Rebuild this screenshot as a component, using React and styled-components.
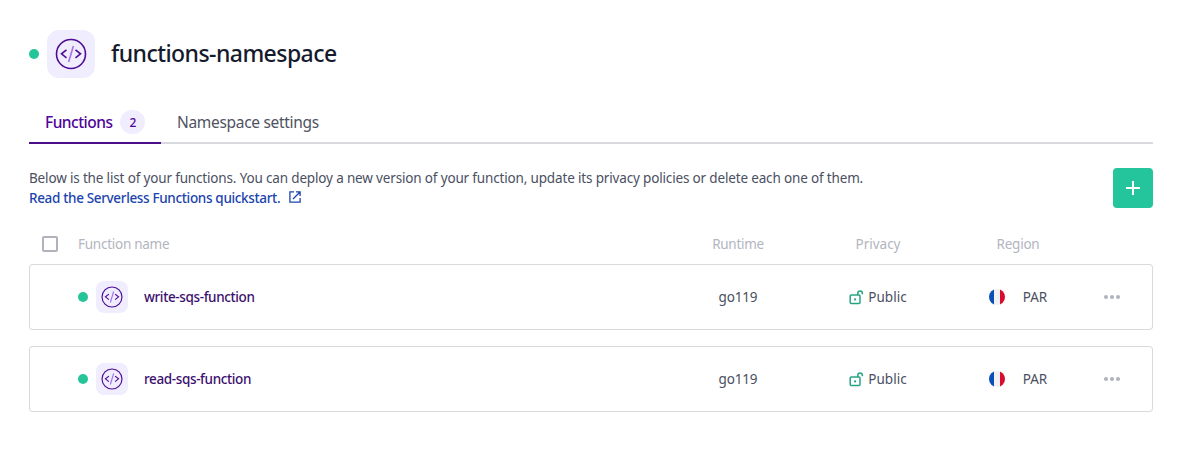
import React from "react";
import styled, { createGlobalStyle } from "styled-components";

const Global = createGlobalStyle`
  * { box-sizing: border-box; }
  body { margin: 0; background: #fff; }
`;

const Page = styled.main`
  min-height: 449px;
  padding: 30px 24px 37px 29px;
  font-family: "Noto Sans", "Open Sans", sans-serif;
  font-size: 13.5px;
  color: #4a4f62;
  background: #fff;
`;

const Text = styled.span`
  white-space: nowrap;
  letter-spacing: ${(p) => p.$spacing || 0}px;
`;

const Header = styled.header`
  display: flex;
  align-items: center;
  height: 48px;
`;

const StatusDot = styled.span`
  flex: none;
  width: 10px;
  height: 10px;
  border-radius: 50%;
  background: #25c599;
  margin-right: 8px;
`;

const IconTile = styled.span`
  flex: none;
  display: grid;
  place-items: center;
  width: ${(p) => p.$size}px;
  height: ${(p) => p.$size}px;
  border-radius: ${(p) => p.$size / 4}px;
  background: #f0edff;
`;

const Title = styled.h1`
  margin: 0 0 0 16px;
  font-size: 23px;
  line-height: 32px;
  padding-bottom: 2px;
  font-weight: 500;
  color: #151a2d;
`;

const Tabs = styled.nav`
  display: flex;
  height: 44px;
  margin-top: 22px;
  box-shadow: inset 0 -2px #d9dadd;
`;

const Tab = styled.a`
  display: flex;
  align-items: center;
  gap: 8px;
  padding: 2px 16px 0;
  width: ${(p) => p.$width}px;
  font-size: 15.5px;
  font-weight: ${(p) => (p.$active ? 500 : 450)};
  color: ${(p) => (p.$active ? "#4f0599" : "#4f5361")};
  border-bottom: 2px solid ${(p) => (p.$active ? "#4b0d88" : "transparent")};
`;

const Badge = styled.span`
  display: grid;
  place-items: center;
  flex: none;
  width: 25px;
  height: 24px;
  border-radius: 12px;
  background: #f0edff;
  font-size: 12px;
  font-weight: 500;
`;

const Intro = styled.section`
  display: flex;
  justify-content: space-between;
  height: 40px;
  margin-top: 24px;
`;

const Copy = styled.p`
  margin: 0;
  line-height: 20px;
`;

const DocLink = styled.a`
  display: flex;
  align-items: center;
  gap: 9px;
  font-weight: 500;
  color: #1b44ad;

  svg { margin-bottom: 3px; }
`;

const AddButton = styled.button`
  display: grid;
  place-items: center;
  width: 40px;
  height: 40px;
  padding: 0;
  border: 0;
  border-radius: 4px;
  background: #24c59c;
`;

const Grid = styled.div`
  display: grid;
  grid-template-columns: 49px 1fr 140px 140px 140px 48px 17px;
  align-items: center;
`;

const TableHead = styled(Grid)`
  height: 40px;
  margin-top: 16px;
  color: #b3b5bf;
`;

const Row = styled(Grid)`
  height: 66px;
  margin-bottom: 16px;
  border-radius: 4px;
  box-shadow: inset 0 0 0 1px #d9dadd;
`;

const Checkbox = styled.span`
  width: 16px;
  height: 16px;
  margin-left: 13px;
  border: 2px solid #b0b2bc;
  border-radius: 2px;
`;

const Cell = styled.div`
  display: flex;
  align-items: center;
  justify-content: center;
  gap: ${(p) => p.$gap || 0}px;
`;

const NameCell = styled.div`
  grid-column: 2;
  display: flex;
  align-items: center;
`;

const FunctionName = styled(Text)`
  margin-left: 16px;
  font-weight: 500;
  color: #3c0f6e;
`;

const Flag = styled.span`
  width: 16px;
  height: 16px;
  border-radius: 50%;
  background: linear-gradient(90deg, #0b4fb3 0 33%, #f1f1f3 33% 67%, #d80c31 67%);
`;

const Svg = styled.svg`
  display: block;
  flex: none;
`;

function CodeIcon({ size, stroke = 1.6 }) {
  return (
    <Svg width={size} height={size} viewBox="0 0 32 32" fill="none" strokeWidth={stroke}>
      <circle cx="16" cy="16" r="14.5" stroke="#4d0c93" />
      <path d="M11.5 11.8 6.5 15.8l5 4M20.5 11.8l5 4-5 4" stroke="#4d0c93" />
      <path d="M18.4 8 13.6 24" stroke="#a574ea" />
    </Svg>
  );
}

function ExternalIcon() {
  return (
    <Svg width="12" height="12" viewBox="0 0 12 12" fill="none" stroke="#1b44ad" strokeWidth="1.3">
      <path d="M5 .9H.9v10.2h10.2V7M7 .9h4.1V5M11 1 4 8" />
    </Svg>
  );
}

function UnlockIcon() {
  return (
    <Svg width="15" height="15" viewBox="0 0 15 15" fill="none" stroke="#27a582" strokeWidth="1.5">
      <rect x="1.2" y="5" width="9.8" height="8.6" rx="1" />
      <path d="M8.8 5V3.4a2.3 2.3 0 0 1 4.6 0V4.3" />
      <rect x="5.1" y="8.4" width="2" height="2" fill="#27a582" stroke="none" />
    </Svg>
  );
}

function FunctionRow({ name, spacing }) {
  return (
    <Row>
      <NameCell>
        <StatusDot />
        <IconTile $size={32}><CodeIcon size={22} stroke={1.7} /></IconTile>
        <FunctionName $spacing={spacing}>{name}</FunctionName>
      </NameCell>
      <Cell><Text $spacing={-0.15}>go119</Text></Cell>
      <Cell $gap={4}><UnlockIcon /><Text>Public</Text></Cell>
      <Cell $gap={18}><Flag /><Text>PAR</Text></Cell>
      <Cell>
        <Svg width="16" height="4" viewBox="0 0 16 4" fill="#b0b2bc">
          <circle cx="2" cy="2" r="2" /><circle cx="8" cy="2" r="2" /><circle cx="14" cy="2" r="2" />
        </Svg>
      </Cell>
    </Row>
  );
}

export default function App() {
  return (
    <>
      <Global />
      <Page>
        <Header>
          <StatusDot />
          <IconTile $size={48}><CodeIcon size={32} /></IconTile>
          <Title><Text $spacing={-0.55}>functions-namespace</Text></Title>
        </Header>
        <Tabs>
          <Tab $active $width={132}><Text $spacing={-0.52}>Functions</Text><Badge>2</Badge></Tab>
          <Tab><Text $spacing={-0.31}>Namespace settings</Text></Tab>
        </Tabs>
        <Intro>
          <Copy>
            <Text $spacing={-0.16}>
              Below is the list of your functions. You can deploy a new version of your function, update its privacy policies or delete each one of them.
            </Text>
            <DocLink><Text $spacing={-0.34}>Read the Serverless Functions quickstart.</Text><ExternalIcon /></DocLink>
          </Copy>
          <AddButton aria-label="Add function">
            <Svg width="14" height="14" viewBox="0 0 14 14" stroke="#fff" strokeWidth="2"><path d="M7 0v14M0 7h14" /></Svg>
          </AddButton>
        </Intro>
        <TableHead>
          <Checkbox />
          <Text $spacing={-0.26}>Function name</Text>
          <Cell><Text $spacing={-0.3}>Runtime</Text></Cell>
          <Cell><Text>Privacy</Text></Cell>
          <Cell><Text $spacing={-0.25}>Region</Text></Cell>
        </TableHead>
        <FunctionRow name="write-sqs-function" spacing={-0.37} />
        <FunctionRow name="read-sqs-function" spacing={-0.37} />
      </Page>
    </>
  );
}
